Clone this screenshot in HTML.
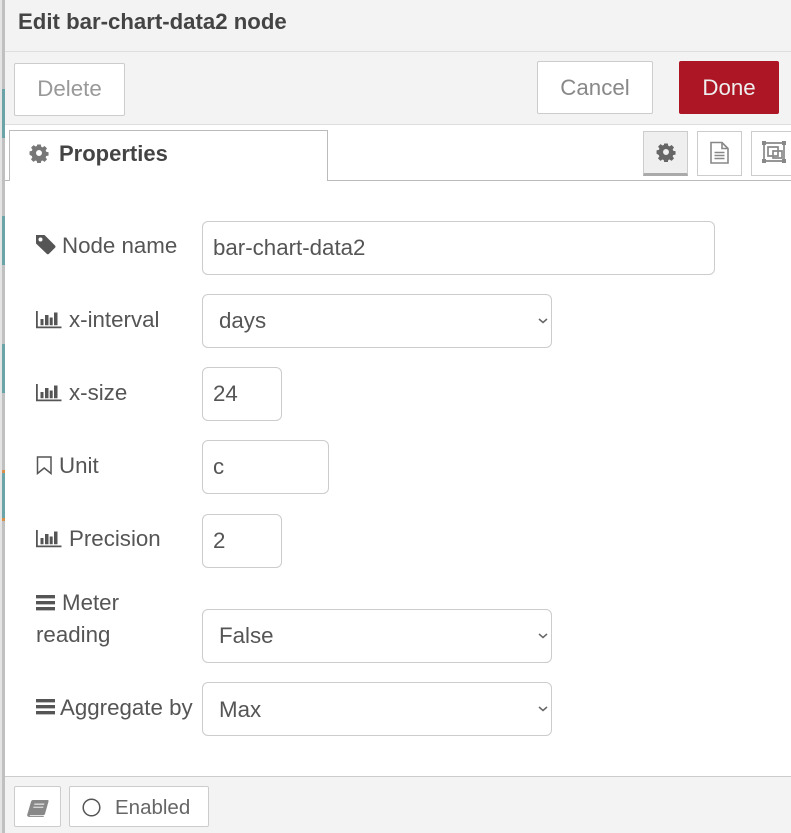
<!DOCTYPE html>
<html><head><meta charset="utf-8"><style>
html,body{margin:0;padding:0;background:#fff}
#p{position:relative;width:791px;height:833px;overflow:hidden;background:#fff;font-family:"Liberation Sans",sans-serif;color:#555;font-size:22.3px}
#p div{position:absolute;box-sizing:border-box;white-space:nowrap}
#p svg{position:absolute}
.b{background:#fff;border:1px solid #ccc;border-radius:2px;text-align:center}
.i{background:#fff;border:1px solid #ccc;border-radius:6px;height:54px;line-height:52px;padding-left:10px}
.s{padding-left:16px}
.l{line-height:26px}
</style></head><body><div id="p">
<div style="left:0;top:0;width:3px;height:833px;background:#e4e4e4"></div>
<div style="left:2px;top:0;width:3px;height:833px;background:#c0c0c0"></div>
<div style="left:2px;top:89px;width:3px;height:49px;background:#6aa3a8"></div>
<div style="left:2px;top:216px;width:3px;height:49px;background:#6aa3a8"></div>
<div style="left:2px;top:344px;width:3px;height:49px;background:#6aa3a8"></div>
<div style="left:2px;top:470px;width:3px;height:51px;background:#6aa3a8"></div>
<div style="left:2px;top:470px;width:3px;height:3px;background:#d98e4a"></div>
<div style="left:2px;top:518px;width:3px;height:3px;background:#d98e4a"></div>
<div style="left:5px;top:0;width:786px;height:125px;background:#f3f3f3"></div>
<div style="left:5px;top:51px;width:786px;height:1px;background:#ddd"></div>
<div style="left:5px;top:124px;width:786px;height:1px;background:#ddd"></div>
<div style="left:18px;top:9px;font-weight:bold;font-size:22.2px;line-height:26px;color:#444">Edit bar-chart-data2 node</div>
<div class="b" style="left:14px;top:63px;width:111px;height:53px;line-height:50px;color:#999">Delete</div>
<div class="b" style="left:537px;top:61px;width:116px;height:53px;line-height:51px;color:#888">Cancel</div>
<div style="left:679px;top:61px;width:100px;height:53px;line-height:53px;background:#ad1625;border-radius:2px;color:#eee;text-align:center">Done</div>
<div style="left:5px;top:180px;width:786px;height:1px;background:#bbb"></div>
<div style="left:9px;top:130px;width:319px;height:51px;background:#fff;border:1px solid #bbb;border-bottom:none"></div>
<svg style="left:29px;top:143px" width="20" height="20" viewBox="0 0 20 20"><path fill="#777" fill-rule="evenodd" d="M8 0.500h4l.5 2.600 1.500.6 2.200-1.500 2.700 2.700-1.500 2.200.6 1.500 2.600.5v3.800l-2.600.5-.6 1.500 1.500 2.200-2.700 2.700-2.200-1.500-1.500.6-.5 2.600H8l-.5-2.600-1.500-.6-2.200 1.500-2.700-2.700 1.500-2.200-.6-1.500L-.5 12V8.200l2.600-.5.6-1.500-1.500-2.200 2.700-2.700 2.200 1.500 1.500-.6zM10 6.700a3.300 3.300 0 1 0 0 6.600 3.300 3.300 0 0 0 0-6.600z" transform="translate(1 1) scale(.9)"/></svg>
<div style="left:59px;top:141px;font-weight:bold;font-size:22px;line-height:26px;color:#444">Properties</div>
<div style="left:643px;top:131px;width:45px;height:45px;background:#efefef;border:1px solid #ccc;border-bottom:3px solid #aaa"></div>
<svg style="left:656px;top:142px" width="20" height="20" viewBox="0 0 20 20"><path fill="#666" fill-rule="evenodd" d="M8 0.500h4l.5 2.600 1.500.6 2.200-1.500 2.700 2.700-1.500 2.200.6 1.500 2.600.5v3.800l-2.600.5-.6 1.500 1.500 2.200-2.700 2.700-2.200-1.500-1.500.6-.5 2.600H8l-.5-2.600-1.500-.6-2.200 1.500-2.700-2.700 1.500-2.200-.6-1.500L-.5 12V8.200l2.600-.5.6-1.500-1.500-2.200 2.700-2.700 2.200 1.500 1.500-.6zM10 6.700a3.300 3.300 0 1 0 0 6.600 3.300 3.300 0 0 0 0-6.600z" transform="translate(1 1) scale(.9)"/></svg>
<div style="left:697px;top:131px;width:45px;height:45px;background:#fff;border:1px solid #ccc"></div>
<svg style="left:709px;top:141px" width="21" height="23" viewBox="0 0 21 23"><path fill="none" stroke="#888" stroke-width="1.600" d="M2 1.500h11l6 6v14.500H2zM13 1.500v6h6M5.500 11.500h10M5.500 14.500h10M5.500 17.500h10"/></svg>
<div style="left:751px;top:131px;width:50px;height:45px;background:#fff;border:1px solid #ccc"></div>
<svg style="left:760px;top:140px" width="28" height="24" viewBox="0 0 28 24"><g fill="none" stroke="#888" stroke-width="1.700"><path d="M4 3h20v18H4z"/><path d="M8 7h10v9H8zM13 11h9v7h-9z"/></g><g fill="#888"><rect x="2" y="1" width="4" height="4"/><rect x="22" y="1" width="4" height="4"/><rect x="2" y="19" width="4" height="4"/><rect x="22" y="19" width="4" height="4"/></g></svg>

<svg style="left:36px;top:235px" width="20" height="20" viewBox="0 0 20 20"><path fill="#555" fill-rule="evenodd" d="M0 0h8.500l10.500 10.500a1.700 1.700 0 0 1 0 2.300l-6 6a1.700 1.700 0 0 1-2.300 0L0 8.500zM4.500 2.500a2 2 0 1 0 0 4 2 2 0 0 0 0-4z"/></svg>
<div class="l" style="left:62px;top:233px">Node name</div>
<div class="i" style="left:202px;top:221px;width:513px">bar-chart-data2</div>

<svg style="left:36px;top:309px" width="26" height="20" viewBox="0 0 26 20"><path fill="#555" d="M0 2h1.800v15.500H25.500v1.800H0zM4.500 10h3v6.300h-3zM9 6h3.500v10.300H9zM13.700 8.500h3v7.800h-3zM18 3.500h3.500v12.800H18z"/></svg>
<div class="l" style="left:69px;top:307px">x-interval</div>
<div class="i s" style="left:202px;top:294px;width:350px">days</div>
<svg style="left:537px;top:317px" width="12" height="8" viewBox="0 0 12 8"><path fill="none" stroke="#666" stroke-width="1.500" d="M2 2 6 5.500 10 2"/></svg>

<svg style="left:36px;top:382px" width="26" height="20" viewBox="0 0 26 20"><path fill="#555" d="M0 2h1.800v15.500H25.500v1.800H0zM4.500 10h3v6.300h-3zM9 6h3.500v10.300H9zM13.700 8.500h3v7.800h-3zM18 3.500h3.500v12.800H18z"/></svg>
<div class="l" style="left:69px;top:380px">x-size</div>
<div class="i" style="left:202px;top:367px;width:80px">24</div>

<svg style="left:36px;top:456px" width="17" height="19" viewBox="0 0 17 19"><path fill="none" stroke="#555" stroke-width="1.500" d="M1.500 1h13.500v16.500L8.200 12 1.500 17.500z"/></svg>
<div class="l" style="left:59px;top:453px">Unit</div>
<div class="i" style="left:202px;top:440px;width:127px">c</div>

<svg style="left:36px;top:528px" width="26" height="20" viewBox="0 0 26 20"><path fill="#555" d="M0 2h1.800v15.500H25.500v1.800H0zM4.500 10h3v6.300h-3zM9 6h3.500v10.300H9zM13.700 8.500h3v7.800h-3zM18 3.500h3.500v12.800H18z"/></svg>
<div class="l" style="left:69px;top:526px">Precision</div>
<div class="i" style="left:202px;top:514px;width:80px">2</div>

<svg style="left:36px;top:595px" width="20" height="16" viewBox="0 0 20 16"><path fill="#555" d="M0 0h19v3.400H0zM0 6h19v3.400H0zM0 12h19v3.400H0z"/></svg>
<div class="l" style="left:62px;top:590px">Meter</div>
<div class="l" style="left:36px;top:622px">reading</div>
<div class="i s" style="left:202px;top:609px;width:350px">False</div>
<svg style="left:537px;top:632px" width="12" height="8" viewBox="0 0 12 8"><path fill="none" stroke="#666" stroke-width="1.500" d="M2 2 6 5.500 10 2"/></svg>

<svg style="left:36px;top:699px" width="20" height="16" viewBox="0 0 20 16"><path fill="#555" d="M0 0h19v3.400H0zM0 6h19v3.400H0zM0 12h19v3.400H0z"/></svg>
<div class="l" style="left:60px;top:695px">Aggregate by</div>
<div class="i s" style="left:202px;top:682px;width:350px;line-height:54px">Max</div>
<svg style="left:537px;top:705px" width="12" height="8" viewBox="0 0 12 8"><path fill="none" stroke="#666" stroke-width="1.500" d="M2 2 6 5.500 10 2"/></svg>

<div style="left:5px;top:776px;width:786px;height:57px;background:#f3f3f3;border-top:1px solid #ccc"></div>
<div class="b" style="left:14px;top:786px;width:47px;height:41px"></div>
<svg style="left:27px;top:800px" width="22" height="17" viewBox="0 0 22 19" preserveAspectRatio="none"><path fill="#888" fill-rule="evenodd" d="M6 0h14.500c1 0 1.300.7 1 1.700L18 15.500c-.3 1-1 1.500-2 1.500H4c-1 0-1.500.3-1.500 1H17l-.5 1H3c-2 0-3-1-2.800-2.500L4 2c.3-1.200 1-2 2-2zM7.500 4l-.4 1.200h10L17.500 4zM6.500 7.500 6.200 8.500h10l.3-1z"/></svg>
<div class="b" style="left:69px;top:786px;width:140px;height:41px"></div>
<svg style="left:82px;top:798px" width="19" height="19" viewBox="0 0 19 19"><circle cx="9.500" cy="9.500" r="8.300" fill="none" stroke="#555" stroke-width="1.500"/></svg>
<div style="left:115px;top:795px;font-size:20.5px;line-height:26px;color:#666">Enabled</div>
</div></body></html>
